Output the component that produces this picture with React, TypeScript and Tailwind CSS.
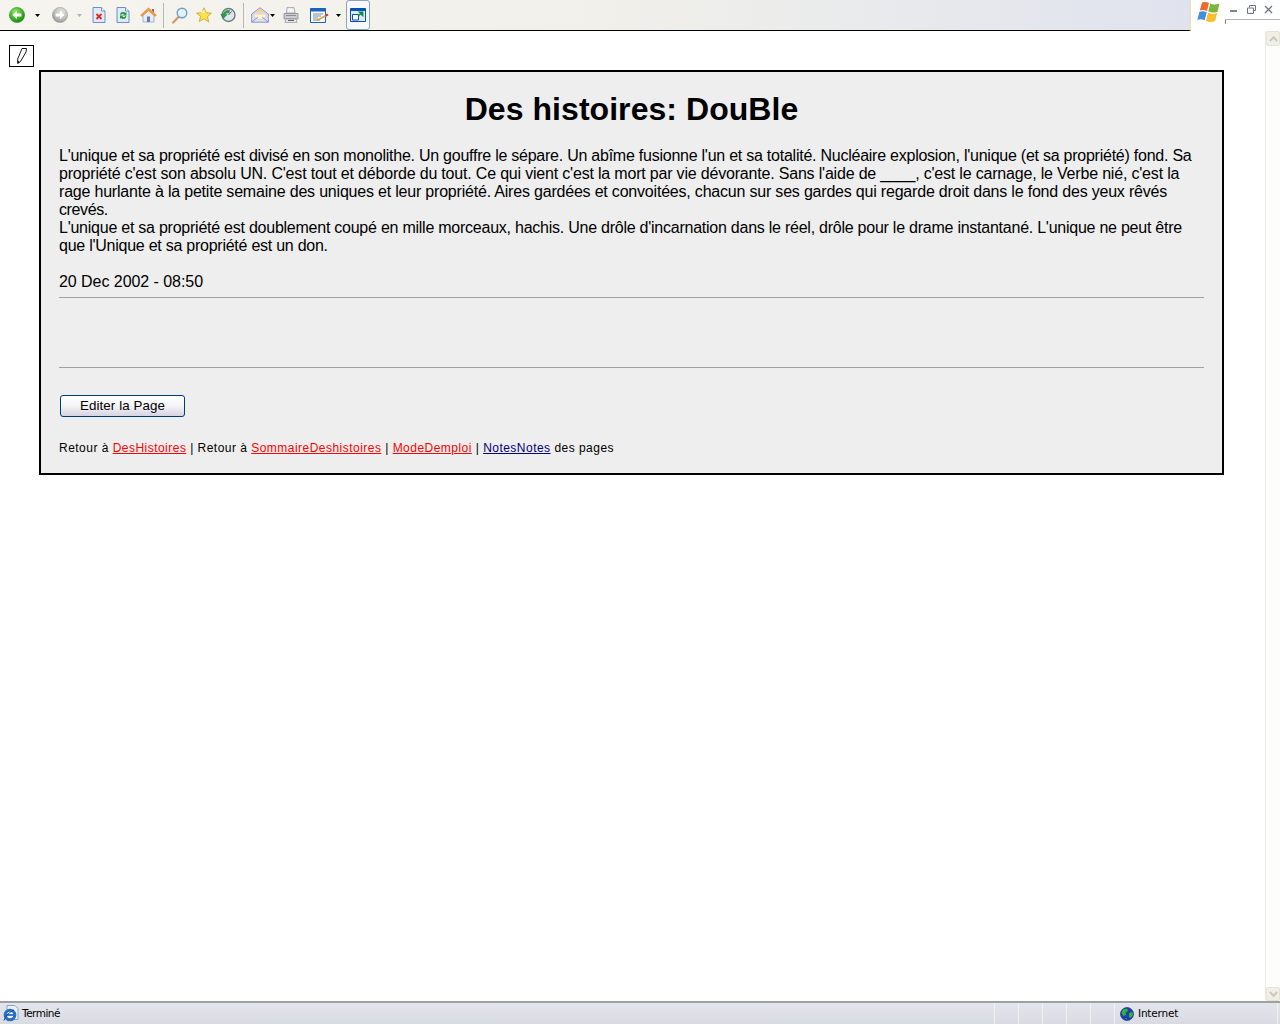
import React from "react";

const Drop = ({ muted = false, className = "" }: { muted?: boolean; className?: string }) => (
  <svg width="5" height="3" viewBox="0 0 5 3" className={className}>
    <path d="M0 0h5L2.5 3z" fill={muted ? "#b4b4b0" : "#000"} />
  </svg>
);

const RoundArrow = ({ id, light, mid, dark, edge }: { id: string; light: string; mid: string; dark: string; edge: string }) => (
  <svg width="16" height="16" viewBox="0 0 16 16">
    <defs>
      <radialGradient id={id} cx="0.4" cy="0.3" r="0.8">
        <stop offset="0" stopColor={light} />
        <stop offset="0.55" stopColor={mid} />
        <stop offset="1" stopColor={dark} />
      </radialGradient>
    </defs>
    <circle cx="8" cy="8" r="7.6" fill={"url(#" + id + ")"} stroke={edge} strokeWidth="0.5" />
    <path d="M3.5 8 8 3.8v2.7h4.4v3H8v2.7z" fill="#fff" />
  </svg>
);

const Page = ({ children }: { children: React.ReactNode }) => (
  <svg width="14" height="16" viewBox="0 0 14 16">
    <path d="M1 .5h8.500L13 4v11.500H1z" fill="#dfe9fa" stroke="#6f8fc4" />
    <path d="M9.500.5V4H13" fill="#fff" stroke="#6f8fc4" />
    {children}
  </svg>
);

const Home = () => (
  <svg width="17" height="16" viewBox="0 0 17 16">
    <path d="M3 8v7h11V8L8.500 3z" fill="#e8ecf5" stroke="#8d9ab5" strokeWidth="0.7" />
    <path d="M.6 8.300 8.500.9l7.900 7.400-1.500 1L8.500 3.600 2.100 9.300z" fill="#f0a048" stroke="#d67a20" strokeWidth="0.6" />
    <path d="M12 2h2v3.500l-2-1.800z" fill="#c9503a" />
    <path d="M7 9.500h3V15H7z" fill="#5b7cc0" />
  </svg>
);

const Search = () => (
  <svg width="16" height="17" viewBox="0 0 16 17">
    <path d="M1.200 15.600 6 10.400" stroke="#d99a58" strokeWidth="2.200" strokeLinecap="round" />
    <circle cx="10" cy="6" r="4.800" fill="#dff0fb" stroke="#6f9ccc" strokeWidth="1.400" />
    <path d="M7.400 5.600a3 3 0 0 1 2.400-2.200" stroke="#fff" fill="none" />
  </svg>
);

const Star = () => (
  <svg width="16" height="16" viewBox="0 0 16 16">
    <path d="m8 .8 2.200 4.900 5.200.5-3.900 3.500 1.200 5.300L8 11.800l-4.700 2.700 1.200-5.300L.6 6.200l5.200-.5z" fill="#fbe14e" stroke="#c8a020" strokeWidth="0.8" />
    <path d="m8 2.500 1.400 3.800H4.500z" fill="#fff6b0" />
  </svg>
);

const History = () => (
  <svg width="16" height="16" viewBox="0 0 16 16">
    <circle cx="8.500" cy="8" r="6.500" fill="#dfe6ee" stroke="#6d7a80" strokeWidth="1.400" />
    <path d="M8.500 8 11.500 4.500" stroke="#555" />
    <path d="M9.500 3.500C6 3 3.600 5 3 7.500H.8L3.800 11l3.300-3.500H5C5.500 6.200 7.500 5.500 9 6z" fill="#25a244" stroke="#127a2c" strokeWidth="0.5" />
  </svg>
);

const Mail = () => (
  <svg width="18" height="16" viewBox="0 0 18 16">
    <path d="M.7 7 9 .8 17.300 7v8.200H.7z" fill="#dfe2f8" stroke="#8a93c8" />
    <path d="M3 7h12v3l-6 3-6-3z" fill="#fdf4da" stroke="#d9b878" strokeWidth="0.5" />
    <path d="M4 5.500h10L9 2z" fill="#f6d27e" />
    <path d="m.7 15.200 6-5m10.600 5-6-5" stroke="#8a93c8" fill="none" />
  </svg>
);

const Printer = () => (
  <svg width="16" height="16" viewBox="0 0 16 16">
    <path d="M4 .6h7l1 5.400H3.500z" fill="#f4f4f4" stroke="#8c8c8c" strokeWidth="0.7" />
    <path d="M1 6.500h14v5.500H1z" fill="#c9ccd0" stroke="#7c7f84" strokeWidth="0.7" />
    <path d="M3 12h10l1 3.400H2z" fill="#eee" stroke="#8c8c8c" strokeWidth="0.7" />
    <path d="M5 13.400h6" stroke="#555" />
    <path d="M3 8.500h10" stroke="#8b8e92" />
  </svg>
);

const Edit = () => (
  <svg width="20" height="15" viewBox="0 0 20 15">
    <path d="M.5.5h15v14H.5z" fill="#f8f8fb" stroke="#1c62bb" />
    <path d="M.5.5h15v3H.5z" fill="#1c62bb" />
    <path d="M3 6h10M3 8h8M3 10h5M3 12h7" stroke="#7f8ea5" />
    <path d="m7 12.500 9-5" stroke="#d6a545" strokeWidth="1.600" />
    <path d="m15.500 7.800 2.500-1.300" stroke="#cc3a2a" strokeWidth="2" />
  </svg>
);

const NewWindow = () => (
  <svg width="16" height="14" viewBox="0 0 16 14">
    <path d="M.5.5h15v13H.5z" fill="#dbe9fb" stroke="#0a50b4" />
    <path d="M.5.5h15v2.500H.5z" fill="#0a50b4" />
    <path d="M2.500 6.500h6v5.500h-6z" fill="#fff" stroke="#0a50b4" />
    <path d="m8 8 4-3.500m-2.400-.3h3v3z" stroke="#0f8a3a" strokeWidth="1.600" fill="#0f8a3a" />
  </svg>
);

const Pencil = () => (
  <svg width="10" height="16" viewBox="0 0 10 16">
    <path d="M5 .5h4.500L9 4 3.500 13.500.7 15.500V11z" fill="#fff" stroke="#000" strokeWidth="0.9" />
    <path d="M.7 12.500 2.500 14 .7 15.500z" fill="#000" />
  </svg>
);

const WinFlag = () => (
  <svg width="25" height="23" viewBox="0 0 25 23">
    <path d="M6 1.500C8 .6 10.500 .8 13 2l-2 8C8.500 8.800 6 8.600 3.800 9.500z" fill="#ee6a2c" />
    <path d="M14.200 2.600C17 3.800 20 3.800 23.500 2.600l-2 8.100c-3 1.200-6.200 1.100-9.200-.2z" fill="#7db53a" />
    <path d="M3.500 10.800C6 10 8.200 10.100 10.700 11.300l-2 8C6.300 18.200 3.700 18 1.300 19z" fill="#3f8ee0" />
    <path d="M12 11.800c3 1.300 6 1.400 9.200.2l-2 8c-3.300 1.300-6.300 1.200-9.200-.1z" fill="#f5c02c" />
  </svg>
);

const Globe = () => (
  <svg width="14" height="14" viewBox="0 0 14 14">
    <circle cx="7" cy="7" r="6.500" fill="#1a3fb8" stroke="#10205c" strokeWidth="0.6" />
    <path d="M3 2.500 7 1.500l1 2-2.500 2.500L6 8 3.500 9 1.500 6zM9 6l3.500-1L13 8l-2.500 3-1.500-1zM5 11l2 .5L6.500 13z" fill="#33b533" />
  </svg>
);

const IeIcon = () => (
  <svg width="16" height="17" viewBox="0 0 16 17">
    <path d="M4 .5h8l3 3v11H4z" fill="#e8effa" stroke="#8aa5cc" />
    <circle cx="7" cy="10" r="4.800" fill="none" stroke="#2a6cc4" strokeWidth="3" />
    <path d="M2.500 10h9" stroke="#2a6cc4" strokeWidth="1.800" />
    <path d="M1 15.500c1-4 6-9 10-10.500" stroke="#174a94" fill="none" strokeWidth="1" />
  </svg>
);

const Sep = ({ className = "" }: { className?: string }) => (
  <div className={"h-[25px] w-px bg-[#b8b8b4] " + className} />
);

const Toolbar = () => (
  <div className="flex h-[31px] w-[1191px] items-center border-b border-r-2 border-b-black border-r-[#e6e0cc] bg-gradient-to-r from-[#f5f4ee] via-[#f1f0ea] to-[#e0e3ee] pl-[9px]">
    <RoundArrow id="back" light="#9fe86a" mid="#3cb521" dark="#137a12" edge="#137a12" />
    <Drop className="ml-[10px]" />
    <div className="ml-[12px] -scale-x-100">
      <RoundArrow id="fwd" light="#e6e6e6" mid="#bdbdbd" dark="#8d8d8d" edge="#8d8d8d" />
    </div>
    <Drop muted className="ml-[9px]" />
    <div className="ml-[10px]">
      <Page>
        <path d="m4.500 7 5 5m0-5-5 5" stroke="#e0281e" strokeWidth="1.800" />
      </Page>
    </div>
    <div className="ml-[10px]">
      <Page>
        <path d="M4 7.500a3.200 3.200 0 0 1 5.500-1.500l1-1v3.500H7l1-1a1.800 1.800 0 0 0-2.800.5zM10.500 9.500A3.200 3.200 0 0 1 5 11l-1 1V8.500h3.500l-1 1a1.800 1.800 0 0 0 2.800-.5z" fill="#1f9a3c" />
      </Page>
    </div>
    <div className="ml-[10px]">
      <Home />
    </div>
    <Sep className="ml-[6px]" />
    <div className="ml-[8px]">
      <Search />
    </div>
    <div className="ml-[8px]">
      <Star />
    </div>
    <div className="ml-[8px]">
      <History />
    </div>
    <Sep className="ml-[7px]" />
    <div className="ml-[7px]">
      <Mail />
    </div>
    <Drop className="ml-px" />
    <div className="ml-[8px]">
      <Printer />
    </div>
    <div className="ml-[11px]">
      <Edit />
    </div>
    <Drop className="ml-[6px]" />
    <div className="ml-[5px] flex h-[30px] w-[24px] items-center justify-center rounded-[3px] border border-[#8ea2bc] bg-[#f7f8fb]">
      <NewWindow />
    </div>
  </div>
);

const WindowControls = () => (
  <div className="relative flex h-[31px] flex-1 bg-white">
    <div className="ml-[5px] mt-px">
      <WinFlag />
    </div>
    <div className="ml-[9px] mt-[5px] flex h-[9px] items-start">
      <div className="mt-[5px] h-[2px] w-[7px] bg-[#7d8590]" />
      <svg width="9" height="9" viewBox="0 0 9 9" className="ml-[10px]">
        <path d="M2.500 2.500V.5h6v5h-2M.5 3h6v5.500h-6z" fill="none" stroke="#6d7580" />
      </svg>
      <svg width="9" height="9" viewBox="0 0 9 9" className="ml-[8px]">
        <path d="m1 1 7 7m0-7-7 7" stroke="#6d7580" strokeWidth="1.300" />
      </svg>
    </div>
    <div className="absolute left-[34px] right-0 top-[19px] h-[5px] border-l border-t border-l-[#888] border-t-[#bbb]" />
  </div>
);

const Scrollbar = () => (
  <div className="flex h-full w-[15px] flex-col justify-between border-l border-[#eeede5] bg-[#fdfdfb]">
    <div className="flex h-[15px] items-center justify-center rounded-[2px] border border-[#e6e4d8] bg-[#f0efe6]">
      <svg width="9" height="6" viewBox="0 0 9 6">
        <path d="M.8 5 4.500 1.300 8.200 5" fill="none" stroke="#c9c8ba" strokeWidth="2" />
      </svg>
    </div>
    <div className="flex h-[14px] items-center justify-center rounded-[2px] border border-[#e6e4d8] bg-[#f0efe6]">
      <svg width="9" height="6" viewBox="0 0 9 6">
        <path d="M.8 1 4.500 4.700 8.200 1" fill="none" stroke="#c9c8ba" strokeWidth="2" />
      </svg>
    </div>
  </div>
);

const StatusBar = () => (
  <div className="flex h-[23px] items-center border-t-2 border-t-[#a0a0a0] bg-gradient-to-b from-[#e4e5ec] to-[#d9dbe3] font-['DejaVu_Sans',sans-serif] text-[10.5px] text-black">
    <div className="ml-[3px]">
      <IeIcon />
    </div>
    <span className="ml-[3px] w-[972px] tracking-[-0.5px]">Terminé</span>
    {[0, 1, 2, 3, 4].map((i) => (
      <div key={i} className="h-full w-[24px] border-l border-[#f4f2e6]" />
    ))}
    <div className="mr-[2px] flex h-full flex-1 items-center border-x border-[#f4f2e6] pl-[5px]">
      <Globe />
      <span className="ml-[4px] tracking-[-0.2px]">Internet</span>
    </div>
  </div>
);

const links = "underline text-[#ff0000]";

const App = () => {
  return (
    <div className="flex h-[1024px] w-[1280px] flex-col overflow-hidden bg-white font-['Liberation_Sans',Arial,sans-serif] text-black">
      <div className="flex">
        <Toolbar />
        <WindowControls />
      </div>
      <div className="flex min-h-0 flex-1">
        <main className="w-[1265px] pl-[9px] pt-[14px]">
          <div className="flex h-[22px] w-[25px] items-center justify-center border border-black bg-white">
            <Pencil />
          </div>
          <div className="ml-[30px] mt-[3px] w-[1185px] border-2 border-black bg-[#eeeeee] px-[18px] pb-[18px] pt-[19px]">
            <h1 className="h-[37px] text-center text-[32px] font-bold leading-[37px] tracking-[0.05px]">Des histoires: DouBle</h1>
            <div className="mt-[19px] whitespace-nowrap text-[16px] leading-[18px]">
              <p className="tracking-[-0.243px]">L'unique et sa propriété est divisé en son monolithe. Un gouffre le sépare. Un abîme fusionne l'un et sa totalité. Nucléaire explosion, l'unique (et sa propriété) fond. Sa</p>
              <p className="tracking-[-0.19px]">propriété c'est son absolu UN. C'est tout et déborde du tout. Ce qui vient c'est la mort par vie dévorante. Sans l'aide de ____, c'est le carnage, le Verbe nié, c'est la</p>
              <p className="tracking-[-0.2px]">rage hurlante à la petite semaine des uniques et leur propriété. Aires gardées et convoitées, chacun sur ses gardes qui regarde droit dans le fond des yeux rêvés</p>
              <p className="tracking-[-0.4px]">crevés.</p>
              <p className="tracking-[-0.243px]">L'unique et sa propriété est doublement coupé en mille morceaux, hachis. Une drôle d'incarnation dans le réel, drôle pour le drame instantané. L'unique ne peut être</p>
              <p className="tracking-[-0.25px]">que l'Unique et sa propriété est un don.</p>
            </div>
            <p className="mt-[18px] text-[16px] leading-[18px] tracking-[-0.05px]">20 Dec 2002 - 08:50</p>
            <div className="mt-[6px] h-px bg-[#a0a0a0]" />
            <div className="mt-[69px] h-px bg-[#a0a0a0]" />
            <button className="ml-px mt-[27px] block h-[22px] w-[125px] rounded-[3px] border border-[#003c74] bg-gradient-to-b from-white via-[#f4f3f6] to-[#d6d3e2] text-center text-[13.33px] leading-[20px] tracking-[0.1px]">
              Editer la Page
            </button>
            <p className="mt-[24px] text-[12px] leading-[14px] tracking-[0.475px]">
              Retour à <a className={links}>DesHistoires</a> | Retour à <a className={links}>SommaireDeshistoires</a> | <a className={links}>ModeDemploi</a> | <a className="text-[#000080] underline">NotesNotes</a> des pages
            </p>
          </div>
        </main>
        <Scrollbar />
      </div>
      <StatusBar />
    </div>
  );
};

export default App;
